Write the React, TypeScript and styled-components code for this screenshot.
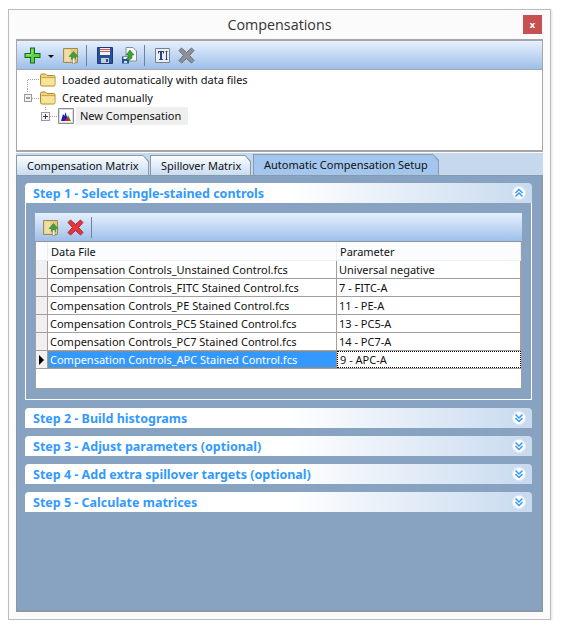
import React from 'react';
import styled, { createGlobalStyle } from 'styled-components';

const GlobalStyle = createGlobalStyle`
  html, body {
    margin: 0;
    padding: 0;
    background: #fff;
    font-family: "Noto Sans", "Open Sans", sans-serif;
    font-size: 11px;
    color: #111;
  }
`;

// Window shell
const Window = styled.div`
  box-sizing: border-box;
  width: 543px;
  height: 611px;
  margin: 9px 0 0 8px;
  padding: 0 7px 7px;
  display: flex;
  flex-direction: column;
  background: #fbfbfb;
  border: 1px solid #bcbcbc;
  box-shadow: 1px 1px 2px rgba(0, 0, 0, 0.12);
`;

const TitleBar = styled.div`
  height: 29px;
  flex: none;
  display: flex;
  align-items: center;
  justify-content: center;
  position: relative;
`;

const Title = styled.div`
  font-family: "Open Sans", sans-serif;
  font-size: 14.3px;
  color: #333;
`;

const CloseButton = styled.div`
  position: absolute;
  right: 1px;
  top: 5px;
  width: 19px;
  height: 19px;
  background: #c75050;
  color: #fff;
  font-family: "DejaVu Sans", sans-serif;
  font-weight: bold;
  font-size: 9px;
  display: flex;
  align-items: center;
  justify-content: center;
`;

const Toolbar = styled.div<{ $small?: boolean }>`
  box-sizing: border-box;
  height: ${p => (p.$small ? 28 : 30)}px;
  flex: none;
  display: flex;
  align-items: center;
  gap: 8px;
  padding-left: ${p => (p.$small ? 8 : 7)}px;
  background: linear-gradient(#e6f0ff, #9ebfe9);
  border-top: ${p => (p.$small ? 0 : 2)}px solid #a6a6a6;
  border-left: ${p => (p.$small ? 0 : 1)}px solid #a6a6a6;
  border-right: ${p => (p.$small ? 0 : 1)}px solid #a6a6a6;
`;

const ToolSeparator = styled.div`
  width: 1px;
  height: 21px;
  margin: 0 2px 0 -1px;
  background: #6f8398;
`;

const DropArrow = styled.div`
  width: 0;
  height: 0;
  margin: 2px 1px 0 -1px;
  border-left: 3px solid transparent;
  border-right: 3px solid transparent;
  border-top: 3px solid #111;
`;

// Tree
const TreePanel = styled.div`
  box-sizing: border-box;
  height: 83px;
  flex: none;
  padding-top: 1px;
  background: #fff;
  border: 1px solid #a6a6a6;
  border-bottom-width: 2px;
`;

const TreeRow = styled.div<{ $indent: number }>`
  height: 18px;
  display: flex;
  align-items: center;
  padding-left: ${p => p.$indent}px;
`;

const TreeGutter = styled.svg`
  flex: none;
  display: block;
`;

const TreeLabel = styled.div<{ $selected?: boolean }>`
  height: 18px;
  line-height: 17px;
  margin-left: ${p => (p.$selected ? 2 : 6)}px;
  padding: ${p => (p.$selected ? '0 7px 0 4px' : '0')};
  background: ${p => (p.$selected ? '#efefef' : 'transparent')};
`;

// Tabs
const TabStrip = styled.div`
  height: 22px;
  flex: none;
  margin-top: 1px;
  display: flex;
  align-items: flex-end;
  gap: 1px;
  background: #c5d8ee;
`;

const TabEdge = styled.div<{ $width: number; $active?: boolean }>`
  box-sizing: border-box;
  width: ${p => p.$width}px;
  height: ${p => (p.$active ? 21 : 20)}px;
  padding: 1px 1px 0;
  margin-left: ${p => (p.$active ? 1 : 0)}px;
  background: #8a9aa8;
  clip-path: polygon(0 0, calc(100% - 6px) 0, 100% 6px, 100% 100%, 0 100%);
`;

const TabFace = styled.div<{ $active?: boolean }>`
  height: 100%;
  padding-left: 10px;
  line-height: 20px;
  background: ${p => (p.$active ? '#a3c6ee' : 'linear-gradient(#fbfdff, #c8dcf2)')};
  clip-path: polygon(0 0, calc(100% - 5px) 0, 100% 6px, 100% 100%, 0 100%);
`;

// Tab page with collapsible steps
const TabPage = styled.div`
  box-sizing: border-box;
  flex: 1;
  display: flex;
  flex-direction: column;
  gap: 8px;
  padding: 7px 9px 0 8px;
  background: #88a3c1;
  border: 1px solid #8b98a6;
  border-right-width: 2px;
  border-bottom-width: 2px;
`;

const StepBox = styled.div``;

const StepHeader = styled.div`
  box-sizing: border-box;
  height: 20px;
  display: flex;
  align-items: center;
  justify-content: space-between;
  padding: 0 6px 0 8px;
  border-radius: 4px 4px 0 0;
  background: linear-gradient(90deg, #fff 0%, #fff 52%, #c8daef 100%);
`;

const StepTitle = styled.div`
  font-weight: bold;
  font-size: 12.5px;
  color: #3399ff;
`;

const StepBody = styled.div`
  padding: 10px 9px 10px;
  border: 1px solid #fff;
  border-top: 0;
`;

// Data grid
const Grid = styled.div`
  box-sizing: border-box;
  height: 148px;
  background: #fff;
  border: 1px solid #a0a0a0;
  border-top-color: #8a96a3;
`;

const GridRow = styled.div<{ $head?: boolean }>`
  box-sizing: border-box;
  height: ${p => (p.$head ? 19 : 18)}px;
  display: grid;
  grid-template-columns: 12px 289px 1fr;
  background: ${p => (p.$head ? '#fbfcfe' : '#fff')};
  border-bottom: 1px solid ${p => (p.$head ? '#e9eff8' : '#a0a0a0')};
`;

const RowHeader = styled.div<{ $head?: boolean }>`
  display: flex;
  align-items: center;
  justify-content: center;
  background: ${p => (p.$head ? 'transparent' : '#f0f0f0')};
  border-right: 1px solid ${p => (p.$head ? '#e9eff8' : '#a0a0a0')};
`;

const RowArrow = styled.div`
  width: 0;
  height: 0;
  border-top: 5px solid transparent;
  border-bottom: 5px solid transparent;
  border-left: 5px solid #000;
`;

const Cell = styled.div<{ $head?: boolean; $selected?: boolean; $focused?: boolean }>`
  box-sizing: border-box;
  padding-left: ${p => (p.$head || p.$focused ? 3 : 2)}px;
  line-height: ${p => (p.$head ? 19 : 17)}px;
  white-space: nowrap;
  overflow: hidden;
  color: ${p => (p.$selected ? '#fff' : '#111')};
  background: ${p => (p.$selected ? '#3399ff' : 'transparent')};
  border-right: 1px solid ${p => (p.$head ? '#e9eff8' : '#a0a0a0')};
  ${p => p.$selected && 'outline: 1px dotted #c9823a; outline-offset: -1px;'}
  ${p => p.$focused && 'outline: 1px dotted #000; outline-offset: -1px; border-right: 0;'}
`;

const ChevronBadge = styled.svg`
  display: block;
  flex: none;
`;

// Icons
const PlusIcon = () => (
  <svg width="17" height="17" viewBox="0 0 17 17">
    <path d="M6 .5h5v5.500h5.500v5H11v5.500H6V11H.5V6H6z" fill="#136d17" />
    <path d="M7 1.500h3V7h5.500v3H10v5.500H7V10H1.500V7H7z" fill="#62cc42" />
    <path d="M7.500 2h1v5.500h-1zM2 7.500h5.500v1H2z" fill="#a6ec8c" />
  </svg>
);

const ImportIcon = () => (
  <svg width="16" height="17" viewBox="0 0 16 17">
    <path d="M.5 1.500h14v14H.5z" fill="#e4c87e" stroke="#a28a4e" />
    <path d="M1.500 2.500h6v12h-6z" fill="#efdda8" />
    <path d="M6 9.500l4.500-5 4.500 5h-2.500v3H8.500v-3z" fill="#3f9f3a" stroke="#2b7a2a" strokeWidth=".5" />
    <path d="M9.500 11h2.500v5.500H9.500z" fill="#f8f4e4" stroke="#6d6d5c" strokeWidth=".5" />
  </svg>
);

const SaveIcon = () => (
  <svg width="16" height="17" viewBox="0 0 16 17">
    <path d="M.5.5h15v16H.5z" fill="#28519c" stroke="#1b3a78" />
    <path d="M3 1h10v7H3z" fill="#f2f2f2" />
    <path d="M3 2h10v1H3zM3 4h10v1H3z" fill="#d05a62" />
    <path d="M4 11h8v5H4z" fill="#c7ccd6" />
    <path d="M9 12h2v3H9z" fill="#28519c" />
  </svg>
);

const SaveAsIcon = () => (
  <svg width="16" height="17" viewBox="0 0 16 17">
    <path d="M5 .5h7l3.500 3.500v10H5z" fill="#f7f7f7" stroke="#8d8d8d" />
    <path d="M1 9.500h7v7H1z" fill="#28519c" />
    <path d="M2.500 10h4v2h-4z" fill="#fff" />
    <path d="M3 14h3v2H3z" fill="#d8dce4" />
    <path d="M5 12l2-1V8H5l4-5 4 5h-2v3l-3 2.500z" fill="#3aa335" stroke="#1d6b20" strokeWidth=".5" />
  </svg>
);

const TextIcon = () => (
  <svg width="15" height="15" viewBox="0 0 15 15">
    <path d="M.5.5h14v14H.5z" fill="#e9eef5" stroke="#77808d" />
    <path d="M3 3h6v2.500H8V4H7v7h1v1H4v-1h1V4H4v1.500H3z" fill="#28407c" />
    <path d="M10.500 3h2v1h-.5v7h.5v1h-2v-1h.5V4h-.5z" fill="#28407c" />
  </svg>
);

const CrossIcon = ({ color, edge }: { color: string; edge: string }) => (
  <svg width="17" height="17" viewBox="0 0 17 17">
    <path
      d="M3.500 1L8.500 5.500 13.500 1 16 3.500 11.500 8.500 16 13.500 13.500 16 8.500 11.500 3.500 16 1 13.500 5.500 8.500 1 3.500z"
      fill={color}
      stroke={edge}
      strokeWidth="1"
      strokeLinejoin="round"
    />
  </svg>
);

const FolderIcon = () => (
  <svg width="16" height="14" viewBox="0 0 16 14">
    <path d="M.5 2.500Q.5 1 2 1h3.500L7 2.500h6.500q1.500 0 1.500 1.500v7.500q0 1.500-1.500 1.500H2q-1.500 0-1.500-1.500z" fill="#f2d27a" stroke="#a98a2e" />
    <path d="M1.500 5.500h13v6.200q0 .6-.8.600H2.300q-.8 0-.8-.6z" fill="#f9e39a" />
    <path d="M1.500 4.500h13" stroke="#c8a84a" />
  </svg>
);

const HistogramIcon = () => (
  <svg width="16" height="16" viewBox="0 0 16 16">
    <path d="M.5.500h15v15H.5z" fill="#dcdcdc" stroke="#8d8d8d" />
    <path d="M2 2h12v12H2z" fill="#fff" />
    <path d="M3 13L5 6l1.500 2L7.500 4 9 9v4z" fill="#1b1fb8" />
    <path d="M8 13l2-6 3 6z" fill="#2e9e2a" />
    <path d="M6.500 13l3-4 2.500 4z" fill="#e01e1e" />
  </svg>
);

const ConnectorLeaf = () => (
  <TreeGutter width="16" height="18" viewBox="0 0 16 18">
    <path d="M3.500 9V18M4 8.500H16" stroke="#a0a0a0" strokeDasharray="1 1" fill="none" />
  </TreeGutter>
);

const ConnectorMinus = () => (
  <TreeGutter width="16" height="18" viewBox="0 0 16 18">
    <path d="M3.500 0V4M8 9.500H16" stroke="#a0a0a0" strokeDasharray="1 1" fill="none" />
    <rect x=".5" y="5.500" width="7" height="7" fill="#f2f2f2" stroke="#9a9a9a" />
    <path d="M2 9h4" stroke="#4a4a4a" />
  </TreeGutter>
);

const ConnectorPlus = () => (
  <TreeGutter width="17" height="18" viewBox="0 0 17 18">
    <path d="M4.500 0V4M9 9.500H17" stroke="#a0a0a0" strokeDasharray="1 1" fill="none" />
    <rect x=".5" y="5.500" width="8" height="8" fill="#f2f2f2" stroke="#9a9a9a" />
    <path d="M2 9.500h5M4.500 7v5" stroke="#2f3c68" />
  </TreeGutter>
);

const Chevrons = ({ up }: { up?: boolean }) => (
  <ChevronBadge width="14" height="14" viewBox="0 0 14 14">
    <circle cx="7" cy="7" r="6.500" fill="#fff" stroke="#dfe8f3" />
    <path
      d={up ? 'M3.500 7L7 3.500 10.500 7M3.500 10.500L7 7 10.500 10.500' : 'M3.500 3.500L7 7 10.500 3.500M3.500 7L7 10.500 10.500 7'}
      fill="none"
      stroke="#3399ff"
      strokeWidth="1.500"
    />
  </ChevronBadge>
);

const rows = [
  ['Compensation Controls_Unstained Control.fcs', 'Universal negative'],
  ['Compensation Controls_FITC Stained Control.fcs', '7 - FITC-A'],
  ['Compensation Controls_PE Stained Control.fcs', '11 - PE-A'],
  ['Compensation Controls_PC5 Stained Control.fcs', '13 - PC5-A'],
  ['Compensation Controls_PC7 Stained Control.fcs', '14 - PC7-A'],
  ['Compensation Controls_APC Stained Control.fcs', '9 - APC-A'],
];

const closedSteps = [
  'Step 2 - Build histograms',
  'Step 3 - Adjust parameters (optional)',
  'Step 4 - Add extra spillover targets (optional)',
  'Step 5 - Calculate matrices',
];

const App: React.FC = () => {
  return (
    <>
      <GlobalStyle />
      <Window>
        <TitleBar>
          <Title>Compensations</Title>
          <CloseButton>x</CloseButton>
        </TitleBar>
        <Toolbar>
          <PlusIcon />
          <DropArrow />
          <ImportIcon />
          <ToolSeparator />
          <SaveIcon />
          <SaveAsIcon />
          <ToolSeparator />
          <TextIcon />
          <CrossIcon color="#8d9299" edge="#6a6f76" />
        </Toolbar>
        <TreePanel>
          <TreeRow $indent={7}>
            <ConnectorLeaf />
            <FolderIcon />
            <TreeLabel>Loaded automatically with data files</TreeLabel>
          </TreeRow>
          <TreeRow $indent={7}>
            <ConnectorMinus />
            <FolderIcon />
            <TreeLabel>Created manually</TreeLabel>
          </TreeRow>
          <TreeRow $indent={24}>
            <ConnectorPlus />
            <HistogramIcon />
            <TreeLabel $selected>New Compensation</TreeLabel>
          </TreeRow>
        </TreePanel>
        <TabStrip>
          <TabEdge $width={133}>
            <TabFace>Compensation Matrix</TabFace>
          </TabEdge>
          <TabEdge $width={101}>
            <TabFace>Spillover Matrix</TabFace>
          </TabEdge>
          <TabEdge $width={186} $active>
            <TabFace $active>Automatic Compensation Setup</TabFace>
          </TabEdge>
        </TabStrip>
        <TabPage>
          <StepBox>
            <StepHeader>
              <StepTitle>Step 1 - Select single-stained controls</StepTitle>
              <Chevrons up />
            </StepHeader>
            <StepBody>
              <Toolbar $small>
                <ImportIcon />
                <CrossIcon color="#e8343c" edge="#a82a30" />
                <ToolSeparator />
              </Toolbar>
              <Grid>
                <GridRow $head>
                  <RowHeader $head />
                  <Cell $head>Data File</Cell>
                  <Cell $head>Parameter</Cell>
                </GridRow>
                {rows.map(([file, param], i) => {
                  const selected = i === rows.length - 1;
                  return (
                    <GridRow key={file}>
                      <RowHeader>{selected && <RowArrow />}</RowHeader>
                      <Cell $selected={selected}>{file}</Cell>
                      <Cell $focused={selected}>{param}</Cell>
                    </GridRow>
                  );
                })}
              </Grid>
            </StepBody>
          </StepBox>
          {closedSteps.map(step => (
            <StepHeader key={step}>
              <StepTitle>{step}</StepTitle>
              <Chevrons />
            </StepHeader>
          ))}
        </TabPage>
      </Window>
    </>
  );
};

export default App;
